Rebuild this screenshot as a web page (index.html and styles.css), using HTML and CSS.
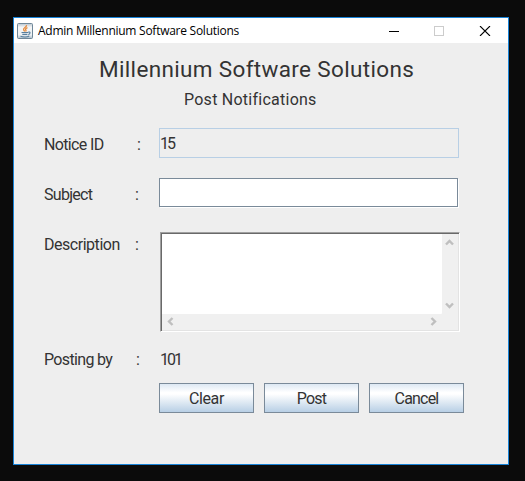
FILE: index.html
```html
<!DOCTYPE html>
<html lang="en">
<head>
<meta charset="utf-8">
<title>Admin Millennium Software Solutions</title>
<link rel="stylesheet" href="styles.css">
</head>
<body>
<main class="window">
  <header class="titlebar">
    <svg class="app-icon" width="16" height="16" viewBox="0 0 16 16">
      <defs><linearGradient id="tile" x1="0" y1="0" x2="0" y2="1"><stop offset="0" stop-color="#b9c5ce"/><stop offset=".25" stop-color="#f4f6f8"/><stop offset=".75" stop-color="#eef2f5"/><stop offset="1" stop-color="#a9bbc8"/></linearGradient></defs>
      <rect x=".5" y=".5" width="15" height="15" rx="1" fill="url(#tile)" stroke="#6f8799"/>
      <path d="M9.500 2.200C10 4.300 6 4.800 6.600 6.700C6.800 7.400 7.500 7.800 7.700 8.500M10.500 4.600C8.700 5.400 8 6.200 8.900 7.200C9.200 7.700 9 8.100 8.600 8.500" fill="none" stroke="#e58a3c" stroke-width="1.300"/>
      <path d="M4.500 9.500H11M5.300 11.400H10.400M3.500 13.300C6 14.100 10.500 14 12.300 13M11 9.200C13.800 8.300 13.500 11 11.300 11.600" fill="none" stroke="#587f9e" stroke-width="1.150"/>
    </svg>
    <span class="window-title">Admin Millennium Software Solutions</span>
    <svg class="controls" width="102" height="10" viewBox="0 0 102 10" shape-rendering="crispEdges">
      <path d="M0 5.500H10" stroke="#000" fill="none"/>
      <rect x="45.500" y=".5" width="9" height="9" fill="none" stroke="#ccc"/>
      <path d="M91 0L101 10M101 0L91 10" stroke="#000" stroke-width="1.100" fill="none" shape-rendering="auto"/>
    </svg>
  </header>
  <h1 class="heading">Millennium Software Solutions</h1>
  <h2 class="subheading">Post Notifications</h2>
  <form class="form">
    <div class="row">
      <span class="label notice">Notice ID</span><span class="colon c-notice">:</span>
      <div class="field readonly">15</div>
    </div>
    <div class="row">
      <span class="label subject">Subject</span><span class="colon">:</span>
      <div class="field editable"></div>
    </div>
    <div class="row row-tall">
      <span class="label description">Description</span><span class="colon">:</span>
      <div class="scrollpane">
        <div class="text"></div>
        <div class="vbar">
          <svg width="9" height="7" viewBox="0 0 9 7"><path d="M1 5.500L4.500 2L8 5.500" class="arrow"/></svg>
          <svg width="9" height="7" viewBox="0 0 9 7"><path d="M1 1.500L4.500 5L8 1.500" class="arrow"/></svg>
        </div>
        <div class="hbar">
          <svg width="7" height="9" viewBox="0 0 7 9"><path d="M5.500 1L2 4.500L5.500 8" class="arrow"/></svg>
          <svg width="7" height="9" viewBox="0 0 7 9"><path d="M1.500 1L5 4.500L1.500 8" class="arrow"/></svg>
        </div>
      </div>
    </div>
    <div class="row row-author">
      <span class="label posting">Posting by</span><span class="colon c-posting">:</span>
      <span class="author">101</span>
    </div>
    <div class="buttons">
      <button type="button" class="b-clear">Clear</button>
      <button type="button" class="b-post">Post</button>
      <button type="button" class="b-cancel">Cancel</button>
    </div>
  </form>
</main>
</body>
</html>
```
FILE: styles.css
```css
* { box-sizing: border-box; }
body {
  margin: 0;
  height: 481px;
  padding: 17px 16px 16px 13px;
  background: #0b0b0b;
  color: #333;
  font-family: Roboto, sans-serif;
  overflow: hidden;
}
.window {
  width: 496px;
  height: 448px;
  border: 1px solid #1883d7;
  background: #eee;
}
.titlebar {
  display: flex;
  align-items: center;
  height: 25px;
  padding-left: 3px;
  background: #fff;
}
.app-icon { flex: none; }
.window-title {
  margin-left: 5px;
  color: #000;
  font: 12px/16px "Open Sans", sans-serif;
  letter-spacing: -0.26px;
  white-space: nowrap;
}
.controls { margin-left: auto; margin-right: 17px; flex: none; }
.heading, .subheading { margin: 0; font-weight: 400; white-space: nowrap; }
.heading {
  padding: 12px 0 0 85px;
  font-size: 22.5px;
  line-height: 28px;
  letter-spacing: 0.34px;
}
.subheading {
  padding-left: 170px;
  font-size: 16px;
  line-height: 34px;
  letter-spacing: 0.25px;
}
.form { margin: 11px 0 0 30px; font-size: 16px; }
.row {
  display: grid;
  grid-template-columns: 90px 25px 300px;
  height: 50px;
  line-height: 33px;
}
.label { white-space: nowrap; }
.notice { letter-spacing: -0.65px; }
.subject { letter-spacing: -0.7px; }
.description { letter-spacing: -0.47px; }
.posting { letter-spacing: -0.65px; }
.colon { padding-left: 1px; }
.c-notice { padding-left: 3px; }
.c-posting { padding-left: 2px; }
.field { height: 30px; border: 1px solid #b8cfe5; }
.readonly { line-height: 29px; letter-spacing: -2px; }
.editable {
  border-color: #7a8a99;
  width: 299px;
  height: 29px;
  background: #fff;
  box-shadow: 1px 1px #fff;
}
.row-tall { height: 115px; }
.scrollpane {
  display: grid;
  grid-template: 80px 16px / 280px 16px;
  width: 300px;
  height: 100px;
  margin: 4px 0 0 1px;
  border: 1px solid;
  border-color: #a0a0a0 #fff #fff #a0a0a0;
  background: #f0f0f0;
  box-shadow: inset 1px 1px #696969, inset -1px -1px #e3e3e3;
  padding: 1px;
}
.text { background: #fff; border-bottom-right-radius: 1px; }
.vbar {
  display: flex;
  flex-direction: column;
  align-items: center;
  justify-content: space-between;
  padding: 5px 1px 5px 0;
}
.hbar {
  display: flex;
  align-items: center;
  justify-content: space-between;
  padding: 0 5px 1px;
}
.arrow { fill: none; stroke: #bfbfbf; stroke-width: 2.4; }
.row-author { height: 40px; }
.author { padding-left: 1px; letter-spacing: -2px; }
.buttons { display: flex; gap: 10px; margin-left: 115px; }
button {
  width: 95px;
  height: 30px;
  padding: 1px 0 0;
  border: 1px solid #7a8a99;
  background: linear-gradient(#dde8f3, #fff 30%, #fff 36%, #b8cfe5);
  color: #333;
  font: 16px/27px Roboto, sans-serif;
  letter-spacing: -0.4px;
}
.b-post, .b-cancel { letter-spacing: -0.8px; }
```
